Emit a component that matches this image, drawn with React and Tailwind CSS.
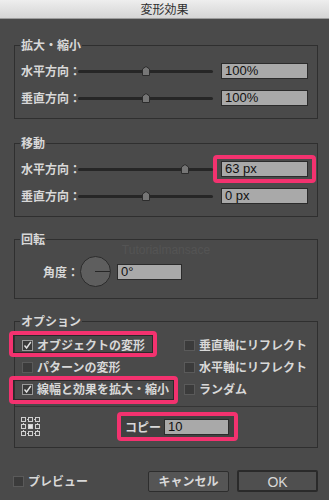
const jp = "font-['Noto_Sans_CJK_JP',sans-serif]";
const latin = "font-['Liberation_Sans','Noto_Sans_CJK_JP',sans-serif]";

function Slider({ thumb }) {
  return (
    <div className="relative flex-1 h-[16px] flex items-center">
      <div className="h-[3px] w-full rounded-full bg-[#262626]" />
      <svg className={`absolute top-[3px] -ml-[4px] ${thumb}`} width="8" height="10" viewBox="0 0 8 10">
        <path d="M0.5 3 L4 0.5 L7.5 3 V9.5 H0.5 Z" fill="#767676" stroke="#2c2c2c" />
      </svg>
    </div>
  );
}

function Field({ value, className = "" }) {
  return (
    <div className={`h-[16px] bg-[#a9a9a9] border border-[#2b2b2b] pl-[3px] text-[13px] leading-[14px] text-[#111] ${latin} ${className}`}>
      {value}
    </div>
  );
}

function Group({ title, className = "", children }) {
  return (
    <div className={`relative border border-[#2f2f2f] ${className}`}>
      <span className="absolute -top-[8px] left-[5px] px-[1px] bg-[#4a4a4a] text-[12px] leading-[14px] font-bold text-[#d8d8d8]">
        {title}
      </span>
      {children}
    </div>
  );
}

function SliderRow({ label, thumb, value }) {
  return (
    <div className="flex items-center h-[16px]">
      <span className="w-[57px] shrink-0 whitespace-nowrap text-[12px] font-bold text-[#d8d8d8]">{label}</span>
      <Slider thumb={thumb} />
      <Field value={value} className="ml-[8px] w-[87px]" />
    </div>
  );
}

function Check({ checked }) {
  return (
    <span
      className={`w-[11px] h-[11px] shrink-0 border flex items-center justify-center ${
        checked ? "border-[#9a9a9a] bg-[#3a3a3a]" : "border-[#5a5a5a] bg-[#3b3b3b]"
      }`}
    >
      {checked && (
        <svg width="9" height="9" viewBox="0 0 9 9">
          <path d="M1.5 4.5 L3.6 7 L7.8 1" fill="none" stroke="#e2e2e2" strokeWidth="1.4" />
        </svg>
      )}
    </span>
  );
}

function Option({ label, checked, highlight }) {
  return (
    <div className="relative flex items-center h-[22px] gap-[4px] text-[12px] font-bold text-[#d8d8d8] whitespace-nowrap">
      {highlight}
      <Check checked={checked} />
      <span>{label}</span>
    </div>
  );
}

function RefPoint() {
  const pts = [0.5, 7.5, 14.5];
  return (
    <svg width="19" height="19" viewBox="0 0 19 19">
      <g stroke="#cfcfcf" strokeWidth="1" fill="none" strokeDasharray="1 1">
        <line x1="4" y1="2.5" x2="8" y2="2.5" />
        <line x1="11" y1="2.5" x2="15" y2="2.5" />
        <line x1="4" y1="16.5" x2="8" y2="16.5" />
        <line x1="11" y1="16.5" x2="15" y2="16.5" />
        <line x1="2.5" y1="4" x2="2.5" y2="8" />
        <line x1="2.5" y1="11" x2="2.5" y2="15" />
        <line x1="16.5" y1="4" x2="16.5" y2="8" />
        <line x1="16.5" y1="11" x2="16.5" y2="15" />
      </g>
      {pts.map((y) =>
        pts.map((x) => (
          <rect
            key={`${x}-${y}`}
            x={x}
            y={y}
            width="4"
            height="4"
            fill={x === 7.5 && y === 7.5 ? "#e4e4e4" : "#4a4a4a"}
            stroke="#d0d0d0"
          />
        ))
      )}
    </svg>
  );
}

export default function App() {
  return (
    <div className={`w-full min-h-screen bg-[#4a4a4a] ${jp}`}>
      <div className="h-[19px] flex items-center justify-center bg-gradient-to-b from-[#eeeeee] to-[#d5d5d5] border-b border-[#9c9c9c] text-[12px] text-[#2e2e2e]">
        変形効果
      </div>

      <div className="pl-[14px] pr-[11px]">
        <Group title="拡大・縮小" className="mt-[26px] pt-[17px] pb-[12px] pl-[6px] pr-[9px] flex flex-col gap-[11px]">
          <SliderRow label="水平方向：" thumb="left-[50%]" value="100%" />
          <SliderRow label="垂直方向：" thumb="left-[50%]" value="100%" />
        </Group>

        <Group title="移動" className="mt-[24px] pt-[17px] pb-[12px] pl-[6px] pr-[9px] flex flex-col gap-[11px]">
          <div className="relative">
            <span className="absolute left-[192px] -top-[6px] w-[103px] h-[28px] rounded-[4px] border-[4px] border-[#f3326f]" />
            <SliderRow label="水平方向：" thumb="left-[79%]" value="63 px" />
          </div>
          <SliderRow label="垂直方向：" thumb="left-[50%]" value="0 px" />
        </Group>

        <Group title="回転" className="mt-[22px] pt-[16px] pb-[11px] pl-[28px]">
          <span className={`absolute left-0 right-0 top-[1px] text-center text-[12px] text-[#545454] ${latin}`}>
            Tutorialmansace
          </span>
          <div className="flex items-center">
            <span className="w-[37px] shrink-0 text-[12px] font-bold text-[#d8d8d8]">角度：</span>
            <div className="relative w-[31px] h-[31px] rounded-full bg-[#5e5e5e] border border-[#2c2c2c]">
              <span className="absolute left-[14px] top-[14px] w-[15px] h-px bg-[#262626]" />
            </div>
            <Field value="0°" className="ml-[6px] w-[65px]" />
          </div>
        </Group>

        <Group title="オプション" className="mt-[22px] pt-[12px] pb-[6px]">
          <div className="grid grid-cols-[162px_1fr] pl-[7px]">
            <Option
              label="オブジェクトの変形"
              checked
              highlight={
                <span className="absolute -left-[13px] -top-[3px] w-[148px] h-[26px] rounded-[4px] border-[4px] border-[#f3326f] shadow-[inset_0_0_0_1px_#2a2a2a]" />
              }
            />
            <Option label="垂直軸にリフレクト" />
            <Option label="パターンの変形" />
            <Option label="水平軸にリフレクト" />
            <Option
              label="線幅と効果を拡大・縮小"
              checked
              highlight={
                <span className="absolute -left-[13px] -top-[2px] w-[169px] h-[28px] rounded-[4px] border-[4px] border-[#f3326f] shadow-[inset_0_0_0_1px_#2a2a2a]" />
              }
            />
            <Option label="ランダム" />
          </div>
          <div className="mt-[6px] h-px bg-[#353535]" />
          <div className="mt-[5px] flex items-center h-[29px] pl-[6px]">
            <RefPoint />
            <div className="ml-[77px] h-[29px] flex items-center rounded-[4px] border-[4px] border-[#f3326f] bg-[#414141] pl-[4px] pr-[5px]">
              <span className="w-[36px] text-[12px] font-bold text-[#d8d8d8] whitespace-nowrap">コピー</span>
              <Field value="10" className="ml-[3px] w-[65px]" />
            </div>
          </div>
        </Group>

        <div className="mt-[22px] flex items-center">
          <div className="-ml-px flex items-center gap-[4px] text-[12px] font-bold text-[#d8d8d8]">
            <Check />
            <span>プレビュー</span>
          </div>
          <button className="ml-auto w-[81px] h-[21px] bg-[#555555] border border-[#2d2d2d] rounded-[2px] text-[12px] font-bold text-[#d8d8d8]">
            キャンセル
          </button>
          <button className={`ml-[8px] w-[81px] h-[22px] bg-[#4f4f4f] border-2 border-[#2a2a2a] rounded-[2px] text-[14px] text-[#d8d8d8] ${latin}`}>
            OK
          </button>
        </div>
      </div>
    </div>
  );
}
